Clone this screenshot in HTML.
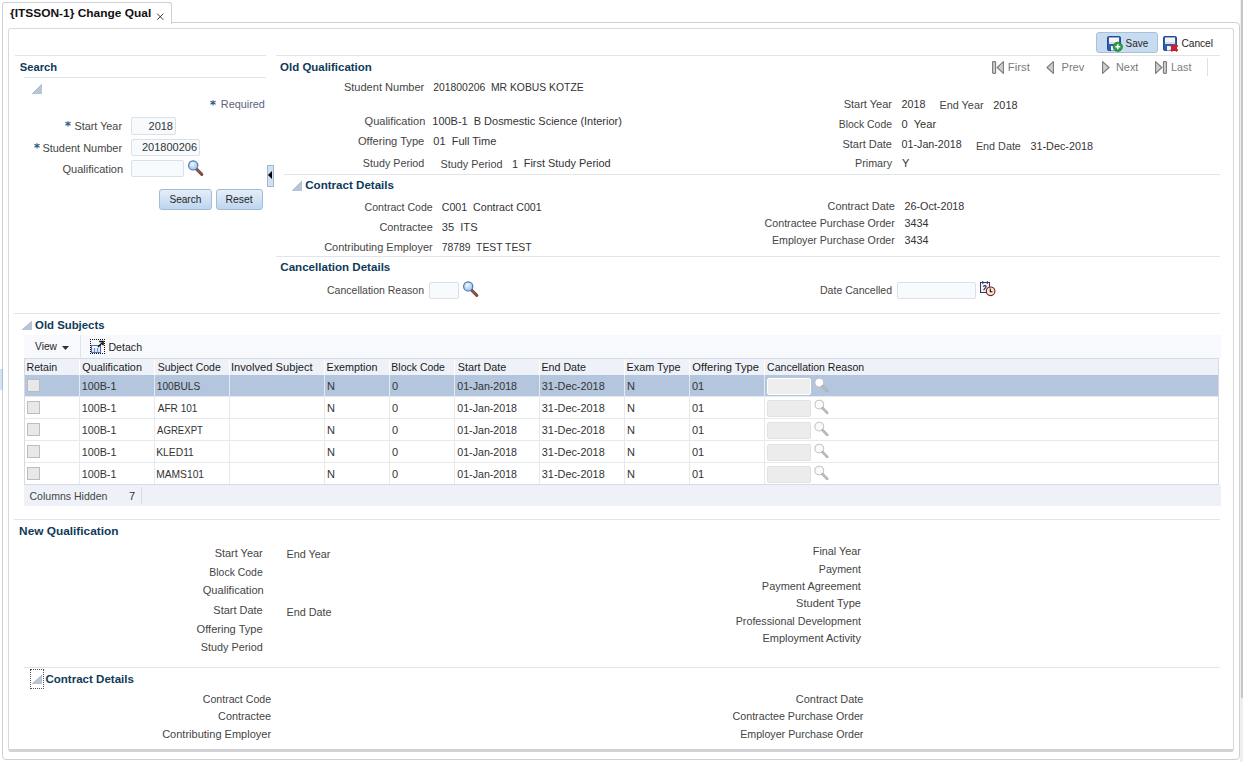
<!DOCTYPE html><html><head><meta charset="utf-8"><style>
html,body{margin:0;padding:0;background:#fff;width:1243px;height:762px;overflow:hidden;position:relative}
div{box-sizing:content-box}
.l,.v,.h,.b,.n,.th,.td{position:absolute;white-space:pre;font-family:"Liberation Sans",sans-serif;font-size:11px;line-height:13px}
.l{color:#454545}
.v{color:#333333}
.th{color:#1a1a1a}
.td{color:#333}
.n{color:#7b7b7b}
.h{color:#0f3a5a;font-weight:bold;font-size:11.5px}
.b{color:#262626}
.r{width:400px;text-align:right}
</style></head><body>

<div style="position:absolute;left:1240px;top:0px;width:3px;height:762px;background:#efefef"></div>
<div style="position:absolute;left:1241px;top:0px;width:2px;height:698px;background:#c6c6c6"></div>
<div style="position:absolute;left:2px;top:22px;width:1236px;height:736px;border:1px solid #cdd0d4;border-radius:0 4px 4px 4px;background:#fff"></div>
<div style="position:absolute;left:0px;top:369px;width:2px;height:21px;background:#d3e2f4;border-right:1px solid #a9bdd6"></div>
<div style="position:absolute;left:2px;top:2px;width:168px;height:21px;border:1px solid #cdd0d4;border-bottom:none;border-radius:3px 3px 0 0;background:#fff"></div>
<div id="t1" class="b" style="left:10px;top:7px;font-weight:bold;font-size:11.5px;color:#111;transform:translateX(0.00px) scaleX(1.0375);transform-origin:0 0;">{ITSSON-1} Change Qual</div>
<svg style="position:absolute;left:156px;top:12px" width="9" height="9" viewBox="0 0 9 9"><path d="M1.2 1.7L7.3 7.8M7.3 1.7L1.2 7.8" stroke="#3a3a3a" stroke-width="1"/></svg>
<div style="position:absolute;left:8px;top:28px;width:1224px;height:720px;border:1px solid #d7dadd;border-bottom:3px solid #d0d2d5;border-radius:3px;background:#fff"></div>
<div style="position:absolute;left:15px;top:55px;width:251px;height:1px;background:#e1e4e8"></div>
<div id="t2" class="h" style="left:20px;top:61px;;transform:translateX(-0.20px) scaleX(0.9711);transform-origin:0 0;">Search</div>
<div style="position:absolute;left:24px;top:77px;width:242px;height:1px;background:#e1e4e8"></div>
<svg style="position:absolute;left:32px;top:84px" width="10" height="10" viewBox="0 0 10 10"><path d="M10 0 L10 10 L0 10 Z" fill="#b7c5d6"/><path d="M10 0 L0 10" stroke="#9fb0c4" stroke-width="0.8"/></svg>
<svg style="position:absolute;left:210px;top:100px" width="6" height="6" viewBox="0 0 6 6"><path d="M3 0.2v5.2M0.4 1.3L5.6 4.3M0.4 4.3L5.6 1.3" stroke="#2a5b86" stroke-width="1.1"/></svg>
<div id="t3" class="l" style="left:222px;top:98px;color:#5a6380;transform:translateX(-1.19px) scaleX(0.9860);transform-origin:0 0;">Required</div>
<svg style="position:absolute;left:65px;top:121px" width="6" height="6" viewBox="0 0 6 6"><path d="M3 0.2v5.2M0.4 1.3L5.6 4.3M0.4 4.3L5.6 1.3" stroke="#2a5b86" stroke-width="1.1"/></svg>
<div id="t4" class="l r" style="left:-277px;top:120px;;transform:translateX(-1.00px) scaleX(0.9833);transform-origin:400px 0;">Start Year</div>
<div style="position:absolute;left:131px;top:117px;width:43px;height:16px;border:1px solid #d9e0e8;background:#f8fbfe;border-radius:2px"></div>
<div id="t5" class="v r" style="left:-227px;top:120px;;">2018</div>
<svg style="position:absolute;left:34px;top:143px" width="6" height="6" viewBox="0 0 6 6"><path d="M3 0.2v5.2M0.4 1.3L5.6 4.3M0.4 4.3L5.6 1.3" stroke="#2a5b86" stroke-width="1.1"/></svg>
<div id="t6" class="l r" style="left:-277px;top:142px;;transform:translateX(-0.90px) scaleX(0.9949);transform-origin:400px 0;">Student Number</div>
<div style="position:absolute;left:131px;top:139px;width:67px;height:15px;border:1px solid #d9e0e8;background:#f8fbfe;border-radius:2px"></div>
<div id="t7" class="v r" style="left:-203px;top:141px;;">201800206</div>
<div id="t8" class="l r" style="left:-277px;top:163px;;transform:translateX(0.10px) scaleX(1.0017);transform-origin:400px 0;">Qualification</div>
<div style="position:absolute;left:131px;top:160px;width:51px;height:15px;border:1px solid #d9e0e8;background:#f8fbfe;border-radius:2px"></div>
<svg style="position:absolute;left:187px;top:160px" width="17" height="17" viewBox="0 0 17 17"><defs><radialGradient id="mg" cx="0.4" cy="0.35" r="0.75"><stop offset="0" stop-color="#eef7ff"/><stop offset="1" stop-color="#8fb9ea"/></radialGradient></defs><path d="M9.8 9.4 L14.8 14.4" stroke="#7a4a3a" stroke-width="3" stroke-linecap="round"/><path d="M10.3 9.9 L14.3 13.9" stroke="#b08070" stroke-width="1" stroke-dasharray="1,1"/><circle cx="6.2" cy="5.4" r="4.6" fill="url(#mg)" stroke="#5078b0" stroke-width="1.2"/></svg>
<div style="position:absolute;left:267px;top:165px;width:5px;height:20px;border:1px solid #a6b7ca;background:#cfe1f5"></div>
<svg style="position:absolute;left:268px;top:171px" width="5" height="8"><path d="M4 0 L0 4 L4 8 Z" fill="#000"/></svg>
<div style="position:absolute;left:159px;top:189px;width:51px;height:19px;border:1px solid #a3bbd4;border-radius:3px;background:linear-gradient(#e4eefa,#bed5ee)"></div>
<div id="t9" class="b" style="left:169px;top:193px;;transform:translateX(0.40px) scaleX(0.9171);transform-origin:0 0;">Search</div>
<div style="position:absolute;left:216px;top:189px;width:45px;height:19px;border:1px solid #a3bbd4;border-radius:3px;background:linear-gradient(#e4eefa,#bed5ee)"></div>
<div id="t10" class="b" style="left:226px;top:193px;;transform:translateX(-0.55px) scaleX(0.9500);transform-origin:0 0;">Reset</div>
<div style="position:absolute;left:276px;top:55px;width:944px;height:1px;background:#e1e4e8"></div>
<div id="t11" class="h" style="left:280px;top:61px;;transform:translateX(0.10px) scaleX(0.9967);transform-origin:0 0;">Old Qualification</div>
<div style="position:absolute;left:1096px;top:32px;width:60px;height:19px;border:1px solid #a9c0d9;border-radius:3px;background:#c8dcf1"></div>
<svg style="position:absolute;left:1107px;top:36px" width="16" height="16" viewBox="0 0 16 16">
<rect x="0.5" y="0.5" width="13" height="14" rx="1.2" fill="#2f5fb3" stroke="#234a90" stroke-width="1"/>
<rect x="2" y="1.5" width="10" height="6.5" fill="#f4f4f4"/><rect x="2" y="6" width="10" height="2" fill="#dcdcdc"/>
<rect x="4" y="10" width="4" height="4.5" fill="#eef2f8"/>
<circle cx="10.8" cy="10.8" r="4.6" fill="#2f9e45" stroke="#1d7a30" stroke-width="0.8"/>
<path d="M10.8 8.3v5M8.3 10.8h5" stroke="#fff" stroke-width="1.5"/></svg>
<div id="t12" class="b" style="left:1126px;top:37px;;transform:translateX(-0.40px) scaleX(0.9040);transform-origin:0 0;">Save</div>
<svg style="position:absolute;left:1163px;top:36px" width="16" height="16" viewBox="0 0 16 16">
<rect x="0.5" y="0.5" width="13" height="14" rx="1.2" fill="#2f5fb3" stroke="#234a90" stroke-width="1"/>
<rect x="2" y="1.5" width="10" height="6.5" fill="#f4f4f4"/><rect x="2" y="6" width="10" height="2" fill="#dcdcdc"/>
<rect x="4" y="10" width="4" height="4.5" fill="#eef2f8"/>
<path d="M8 9L14.5 15M14.5 9L8 15" stroke="#d42020" stroke-width="2.6"/></svg>
<div id="t13" class="b" style="left:1182px;top:37px;;transform:translateX(-0.60px) scaleX(0.9235);transform-origin:0 0;">Cancel</div>
<svg style="position:absolute;left:992px;top:61px" width="13" height="13" viewBox="0 0 13 13"><rect x="0.6" y="0.6" width="3" height="11.8" rx="0.8" fill="#cfcfcf" stroke="#7a7a7a" stroke-width="1.1"/><path d="M11.4 0.6 L5.2 6.5 L11.4 12.4 Z" fill="#cfcfcf" stroke="#7a7a7a" stroke-width="1.1" stroke-linejoin="round"/></svg>
<div id="t14" class="n" style="left:1009px;top:61px;;transform:translateX(-1.24px) scaleX(1.0350);transform-origin:0 0;">First</div>
<svg style="position:absolute;left:1046px;top:61px" width="13" height="13" viewBox="0 0 13 13"><path d="M7.4 0.6 L1.0 6.5 L7.4 12.4 Z" fill="#cfcfcf" stroke="#7a7a7a" stroke-width="1.1" stroke-linejoin="round"/></svg>
<div id="t15" class="n" style="left:1063px;top:61px;;transform:translateX(-1.51px) scaleX(1.0095);transform-origin:0 0;">Prev</div>
<svg style="position:absolute;left:1102px;top:61px" width="13" height="13" viewBox="0 0 13 13"><path d="M0.6 0.6 L7.0 6.5 L0.6 12.4 Z" fill="#cfcfcf" stroke="#7a7a7a" stroke-width="1.1" stroke-linejoin="round"/></svg>
<div id="t16" class="n" style="left:1117px;top:61px;;transform:translateX(-0.99px) scaleX(0.9864);transform-origin:0 0;">Next</div>
<svg style="position:absolute;left:1155px;top:61px" width="13" height="13" viewBox="0 0 13 13"><path d="M0.6 0.6 L6.8 6.5 L0.6 12.4 Z" fill="#cfcfcf" stroke="#7a7a7a" stroke-width="1.1" stroke-linejoin="round"/><rect x="8.4" y="0.6" width="3" height="11.8" rx="0.8" fill="#cfcfcf" stroke="#7a7a7a" stroke-width="1.1"/></svg>
<div id="t17" class="n" style="left:1172px;top:61px;;transform:translateX(-0.88px) scaleX(0.9750);transform-origin:0 0;">Last</div>
<div style="position:absolute;left:1207px;top:58px;width:1px;height:18px;background:#e0e0e0"></div>
<div id="t18" class="l r" style="left:25px;top:81px;;transform:translateX(-0.70px) scaleX(1.0038);transform-origin:400px 0;">Student Number</div>
<div id="t19" class="v" style="left:433px;top:81px;;transform:translateX(0.30px) scaleX(0.9421);transform-origin:0 0;">201800206  MR KOBUS KOTZE</div>
<div id="t20" class="l r" style="left:25px;top:115px;;transform:translateX(0.30px) scaleX(1.0034);transform-origin:400px 0;">Qualification</div>
<div id="t21" class="v" style="left:433px;top:115px;;transform:translateX(-0.70px) scaleX(0.9968);transform-origin:0 0;">100B-1  B Dosmestic Science (Interior)</div>
<div id="t22" class="l r" style="left:25px;top:135px;;transform:translateX(-0.70px) scaleX(1.0108);transform-origin:400px 0;">Offering Type</div>
<div id="t23" class="v" style="left:433px;top:135px;;transform:translateX(0.30px) scaleX(1.0016);transform-origin:0 0;">01  Full Time</div>
<div id="t24" class="l r" style="left:25px;top:157px;;transform:translateX(-0.70px) scaleX(0.9758);transform-origin:400px 0;">Study Period</div>
<div id="t25" class="l" style="left:441px;top:158px;;transform:translateX(-0.48px) scaleX(0.9836);transform-origin:0 0;">Study Period</div>
<div id="t26" class="v" style="left:512px;top:158px;;">1</div>
<div id="t27" class="v" style="left:525px;top:157px;;transform:translateX(-1.29px) scaleX(0.9942);transform-origin:0 0;">First Study Period</div>
<div id="t28" class="l r" style="left:493px;top:98px;;transform:translateX(-1.00px) scaleX(1.0000);transform-origin:400px 0;">Start Year</div>
<div id="t29" class="v" style="left:902px;top:98px;;transform:translateX(-0.40px) scaleX(0.9750);transform-origin:0 0;">2018</div>
<div id="t30" class="l" style="left:940px;top:99px;;transform:translateX(-0.59px) scaleX(0.9886);transform-origin:0 0;">End Year</div>
<div id="t31" class="v" style="left:993px;top:99px;;transform:translateX(0.30px) scaleX(0.9875);transform-origin:0 0;">2018</div>
<div id="t32" class="l r" style="left:493px;top:118px;;transform:translateX(-1.00px) scaleX(0.9464);transform-origin:400px 0;">Block Code</div>
<div id="t33" class="v" style="left:902px;top:118px;;transform:translateX(-0.40px) scaleX(1.0088);transform-origin:0 0;">0  Year</div>
<div id="t34" class="l r" style="left:493px;top:138px;;transform:translateX(-1.00px) scaleX(1.0000);transform-origin:400px 0;">Start Date</div>
<div id="t35" class="v" style="left:902px;top:138px;;transform:translateX(-0.40px) scaleX(0.9710);transform-origin:0 0;">01-Jan-2018</div>
<div id="t36" class="l" style="left:977px;top:140px;;transform:translateX(-1.08px) scaleX(0.9800);transform-origin:0 0;">End Date</div>
<div id="t37" class="v" style="left:1030px;top:140px;;transform:translateX(0.50px) scaleX(0.9825);transform-origin:0 0;">31-Dec-2018</div>
<div id="t38" class="l r" style="left:493px;top:157px;;transform:translateX(-1.00px) scaleX(0.9757);transform-origin:400px 0;">Primary</div>
<div id="t39" class="v" style="left:902px;top:157px;;">Y</div>
<div style="position:absolute;left:284px;top:174px;width:936px;height:1px;background:#e1e4e8"></div>
<svg style="position:absolute;left:292px;top:181px" width="10" height="10" viewBox="0 0 10 10"><path d="M10 0 L10 10 L0 10 Z" fill="#b7c5d6"/><path d="M10 0 L0 10" stroke="#9fb0c4" stroke-width="0.8"/></svg>
<div id="t40" class="h" style="left:305px;top:179px;;transform:translateX(0.20px) scaleX(1.0068);transform-origin:0 0;">Contract Details</div>
<div id="t41" class="l r" style="left:33px;top:201px;;transform:translateX(-0.30px) scaleX(0.9606);transform-origin:400px 0;">Contract Code</div>
<div id="t42" class="v" style="left:442px;top:201px;;transform:translateX(-0.30px) scaleX(0.9670);transform-origin:0 0;">C001  Contract C001</div>
<div id="t43" class="l r" style="left:33px;top:221px;;transform:translateX(-0.30px) scaleX(0.9906);transform-origin:400px 0;">Contractee</div>
<div id="t44" class="v" style="left:442px;top:221px;;transform:translateX(-0.30px) scaleX(1.0114);transform-origin:0 0;">35  ITS</div>
<div id="t45" class="l r" style="left:33px;top:241px;;transform:translateX(-0.30px) scaleX(0.9972);transform-origin:400px 0;">Contributing Employer</div>
<div id="t46" class="v" style="left:442px;top:241px;;transform:translateX(-0.30px) scaleX(0.9421);transform-origin:0 0;">78789  TEST TEST</div>
<div id="t47" class="l r" style="left:495px;top:200px;;transform:translateX(-0.20px) scaleX(0.9910);transform-origin:400px 0;">Contract Date</div>
<div id="t48" class="v" style="left:904px;top:200px;;transform:translateX(0.50px) scaleX(0.9787);transform-origin:0 0;">26-Oct-2018</div>
<div id="t49" class="l r" style="left:495px;top:217px;;transform:translateX(-0.20px) scaleX(0.9679);transform-origin:400px 0;">Contractee Purchase Order</div>
<div id="t50" class="v" style="left:904px;top:217px;;transform:translateX(0.50px) scaleX(0.9792);transform-origin:0 0;">3434</div>
<div id="t51" class="l r" style="left:495px;top:234px;;transform:translateX(-0.20px) scaleX(0.9661);transform-origin:400px 0;">Employer Purchase Order</div>
<div id="t52" class="v" style="left:904px;top:234px;;transform:translateX(0.50px) scaleX(0.9792);transform-origin:0 0;">3434</div>
<div style="position:absolute;left:276px;top:256px;width:944px;height:1px;background:#e1e4e8"></div>
<div id="t53" class="h" style="left:280px;top:261px;;transform:translateX(0.30px) scaleX(1.0064);transform-origin:0 0;">Cancellation Details</div>
<div id="t54" class="l r" style="left:24px;top:284px;;transform:translateX(0.00px) scaleX(0.9554);transform-origin:400px 0;">Cancellation Reason</div>
<div style="position:absolute;left:429px;top:282px;width:28px;height:15px;border:1px solid #d9e0e8;background:#f8fbfe;border-radius:2px"></div>
<svg style="position:absolute;left:462px;top:281px" width="17" height="17" viewBox="0 0 17 17"><defs><radialGradient id="mg" cx="0.4" cy="0.35" r="0.75"><stop offset="0" stop-color="#eef7ff"/><stop offset="1" stop-color="#8fb9ea"/></radialGradient></defs><path d="M9.8 9.4 L14.8 14.4" stroke="#7a4a3a" stroke-width="3" stroke-linecap="round"/><path d="M10.3 9.9 L14.3 13.9" stroke="#b08070" stroke-width="1" stroke-dasharray="1,1"/><circle cx="6.2" cy="5.4" r="4.6" fill="url(#mg)" stroke="#5078b0" stroke-width="1.2"/></svg>
<div id="t55" class="l r" style="left:492px;top:284px;;transform:translateX(0.10px) scaleX(0.9587);transform-origin:400px 0;">Date Cancelled</div>
<div style="position:absolute;left:897px;top:282px;width:77px;height:15px;border:1px solid #d9e0e8;background:#f8fbfe;border-radius:2px"></div>
<svg style="position:absolute;left:979px;top:279px" width="18" height="18" viewBox="0 0 18 18">
<rect x="1.5" y="3.5" width="9" height="10" fill="#eef0fb" stroke="#3c3c68" stroke-width="1"/>
<path d="M3.8 2v3M8.3 2v3" stroke="#3c3c68" stroke-width="1"/>
<path d="M4.3 7.6 Q5.8 5.8 7.2 7.2 Q7.2 8.4 4.6 11" fill="none" stroke="#333" stroke-width="1.1"/>
<circle cx="11.6" cy="12.3" r="4.3" fill="#fbe6d6" stroke="#7a1c16" stroke-width="1.1"/>
<path d="M11.3 9.6v3.1h2.2" fill="none" stroke="#111" stroke-width="1.1"/></svg>
<div style="position:absolute;left:14px;top:313px;width:1206px;height:1px;background:#e1e4e8"></div>
<svg style="position:absolute;left:22px;top:321px" width="10" height="9" viewBox="0 0 10 9"><path d="M10 0 L10 9 L0 9 Z" fill="#b7c5d6"/><path d="M10 0 L0 9" stroke="#9fb0c4" stroke-width="0.8"/></svg>
<div id="t56" class="h" style="left:35px;top:319px;;transform:translateX(0.10px) scaleX(0.9871);transform-origin:0 0;">Old Subjects</div>
<div style="position:absolute;left:24px;top:335px;width:1197px;height:23px;background:#f7f9fc"></div>
<div id="t57" class="b" style="left:35px;top:340px;;transform:translateX(0.10px) scaleX(0.9250);transform-origin:0 0;">View</div>
<svg style="position:absolute;left:62px;top:346px" width="8" height="5"><path d="M0 0 L7 0 L3.5 4 Z" fill="#333"/></svg>
<div style="position:absolute;left:80px;top:335px;width:1px;height:23px;background:#dfe4ea"></div>
<div style="position:absolute;left:90px;top:339px;width:13px;height:13px;border:1px dotted #111"></div>
<svg style="position:absolute;left:90px;top:339px" width="15" height="15" viewBox="0 0 15 15">
<rect x="1.5" y="6.5" width="9" height="7" fill="#dbe9fb" stroke="#4b6fb5" stroke-width="1"/>
<rect x="2" y="7" width="8" height="1.6" fill="#ffffff"/>
<path d="M4.5 9v4.5M7.5 9v4.5" stroke="#6f8fcf" stroke-width="1"/>
<path d="M8 8 L12.3 3.7" stroke="#111" stroke-width="1.4"/><path d="M9.2 2.5h3.8v3.8" fill="none" stroke="#111" stroke-width="1.6"/></svg>
<div id="t58" class="b" style="left:109px;top:341px;;transform:translateX(-0.56px) scaleX(0.9647);transform-origin:0 0;">Detach</div>
<div style="position:absolute;left:24px;top:358px;width:1193px;height:126px;border:1px solid #d5dbe3;border-bottom:none;background:#fff"></div>
<div style="position:absolute;left:25px;top:359px;width:1193px;height:16px;background:#eef2f8"></div>
<div id="t59" class="th" style="left:27px;top:361px;;transform:translateX(-0.46px) scaleX(0.9645);transform-origin:0 0;">Retain</div>
<div id="t60" class="th" style="left:82px;top:361px;;transform:translateX(0.30px) scaleX(0.9850);transform-origin:0 0;">Qualification</div>
<div id="t61" class="th" style="left:157px;top:361px;;transform:translateX(0.70px) scaleX(0.9545);transform-origin:0 0;">Subject Code</div>
<div id="t62" class="th" style="left:232px;top:361px;;transform:translateX(-1.01px) scaleX(1.0125);transform-origin:0 0;">Involved Subject</div>
<div id="t63" class="th" style="left:327px;top:361px;;transform:translateX(-0.48px) scaleX(0.9784);transform-origin:0 0;">Exemption</div>
<div id="t64" class="th" style="left:392px;top:361px;;transform:translateX(-0.65px) scaleX(0.9527);transform-origin:0 0;">Block Code</div>
<div id="t65" class="th" style="left:457px;top:361px;;transform:translateX(0.70px) scaleX(0.9816);transform-origin:0 0;">Start Date</div>
<div id="t66" class="th" style="left:542px;top:361px;;transform:translateX(-0.57px) scaleX(0.9711);transform-origin:0 0;">End Date</div>
<div id="t67" class="th" style="left:627px;top:361px;;transform:translateX(-0.48px) scaleX(0.9833);transform-origin:0 0;">Exam Type</div>
<div id="t68" class="th" style="left:692px;top:361px;;transform:translateX(0.30px) scaleX(1.0169);transform-origin:0 0;">Offering Type</div>
<div id="t69" class="th" style="left:767px;top:361px;;transform:translateX(0.10px) scaleX(0.9554);transform-origin:0 0;">Cancellation Reason</div>
<div style="position:absolute;left:79px;top:359px;width:1px;height:16px;background:#ffffff"></div>
<div style="position:absolute;left:154px;top:359px;width:1px;height:16px;background:#ffffff"></div>
<div style="position:absolute;left:229px;top:359px;width:1px;height:16px;background:#ffffff"></div>
<div style="position:absolute;left:324px;top:359px;width:1px;height:16px;background:#ffffff"></div>
<div style="position:absolute;left:389px;top:359px;width:1px;height:16px;background:#ffffff"></div>
<div style="position:absolute;left:454px;top:359px;width:1px;height:16px;background:#ffffff"></div>
<div style="position:absolute;left:539px;top:359px;width:1px;height:16px;background:#ffffff"></div>
<div style="position:absolute;left:624px;top:359px;width:1px;height:16px;background:#ffffff"></div>
<div style="position:absolute;left:689px;top:359px;width:1px;height:16px;background:#ffffff"></div>
<div style="position:absolute;left:764px;top:359px;width:1px;height:16px;background:#ffffff"></div>
<div style="position:absolute;left:25px;top:375px;width:1193px;height:21px;background:#b3c6dd"></div>
<div style="position:absolute;left:25px;top:396px;width:1193px;height:1px;background:#e6e9ed"></div>
<div style="position:absolute;left:27px;top:379px;width:11px;height:11px;border:1px solid #bdbdbd;background:#e8e8e8"></div>
<div id="t70" class="td" style="left:82px;top:380px;;transform:translateX(-0.28px) scaleX(0.9765);transform-origin:0 0;">100B-1</div>
<div id="t71" class="td" style="left:157px;top:380px;;transform:translateX(-0.22px) scaleX(0.9239);transform-origin:0 0;">100BULS</div>
<div id="t72" class="td" style="left:327px;top:380px;;">N</div>
<div id="t73" class="td" style="left:392px;top:380px;;">0</div>
<div id="t74" class="td" style="left:457px;top:380px;;transform:translateX(0.30px) scaleX(0.9661);transform-origin:0 0;">01-Jan-2018</div>
<div id="t75" class="td" style="left:542px;top:380px;;transform:translateX(-0.20px) scaleX(0.9889);transform-origin:0 0;">31-Dec-2018</div>
<div id="t76" class="td" style="left:627px;top:380px;;">N</div>
<div id="t77" class="td" style="left:692px;top:380px;;">01</div>
<div style="position:absolute;left:767px;top:378px;width:42px;height:15px;border:1px solid #ffffff;background:#eeeeee;border-radius:2px"></div>
<svg style="position:absolute;left:813px;top:377px" width="17" height="17" viewBox="0 0 17 17"><circle cx="6.3" cy="5.6" r="4.4" fill="#ffffff" stroke="#c4c4c4" stroke-width="1.1"/><path d="M9.6 9.2 L14.2 13.8" stroke="#a6a6a6" stroke-width="2.6" stroke-linecap="round"/><path d="M9.6 9.2 L14.2 13.8" stroke="#d8d8d8" stroke-width="1" stroke-linecap="round"/></svg>
<div style="position:absolute;left:25px;top:418px;width:1193px;height:1px;background:#e6e9ed"></div>
<div style="position:absolute;left:27px;top:401px;width:11px;height:11px;border:1px solid #bdbdbd;background:#e8e8e8"></div>
<div id="t78" class="td" style="left:82px;top:402px;;transform:translateX(-0.28px) scaleX(0.9765);transform-origin:0 0;">100B-1</div>
<div id="t79" class="td" style="left:157px;top:402px;;transform:translateX(0.70px) scaleX(0.9163);transform-origin:0 0;">AFR 101</div>
<div id="t80" class="td" style="left:327px;top:402px;;">N</div>
<div id="t81" class="td" style="left:392px;top:402px;;">0</div>
<div id="t82" class="td" style="left:457px;top:402px;;transform:translateX(0.30px) scaleX(0.9661);transform-origin:0 0;">01-Jan-2018</div>
<div id="t83" class="td" style="left:542px;top:402px;;transform:translateX(-0.20px) scaleX(0.9889);transform-origin:0 0;">31-Dec-2018</div>
<div id="t84" class="td" style="left:627px;top:402px;;">N</div>
<div id="t85" class="td" style="left:692px;top:402px;;">01</div>
<div style="position:absolute;left:767px;top:400px;width:42px;height:15px;border:1px solid #e2e2e2;background:#ececec;border-radius:2px"></div>
<svg style="position:absolute;left:813px;top:399px" width="17" height="17" viewBox="0 0 17 17"><circle cx="6.3" cy="5.6" r="4.4" fill="#fafafa" stroke="#c4c4c4" stroke-width="1.1"/><path d="M9.6 9.2 L14.2 13.8" stroke="#a6a6a6" stroke-width="2.6" stroke-linecap="round"/><path d="M9.6 9.2 L14.2 13.8" stroke="#d8d8d8" stroke-width="1" stroke-linecap="round"/></svg>
<div style="position:absolute;left:25px;top:440px;width:1193px;height:1px;background:#e6e9ed"></div>
<div style="position:absolute;left:27px;top:423px;width:11px;height:11px;border:1px solid #bdbdbd;background:#e8e8e8"></div>
<div id="t86" class="td" style="left:82px;top:424px;;transform:translateX(-0.28px) scaleX(0.9765);transform-origin:0 0;">100B-1</div>
<div id="t87" class="td" style="left:157px;top:424px;;transform:translateX(0.10px) scaleX(0.8712);transform-origin:0 0;">AGREXPT</div>
<div id="t88" class="td" style="left:327px;top:424px;;">N</div>
<div id="t89" class="td" style="left:392px;top:424px;;">0</div>
<div id="t90" class="td" style="left:457px;top:424px;;transform:translateX(0.30px) scaleX(0.9661);transform-origin:0 0;">01-Jan-2018</div>
<div id="t91" class="td" style="left:542px;top:424px;;transform:translateX(-0.20px) scaleX(0.9889);transform-origin:0 0;">31-Dec-2018</div>
<div id="t92" class="td" style="left:627px;top:424px;;">N</div>
<div id="t93" class="td" style="left:692px;top:424px;;">01</div>
<div style="position:absolute;left:767px;top:422px;width:42px;height:15px;border:1px solid #e2e2e2;background:#ececec;border-radius:2px"></div>
<svg style="position:absolute;left:813px;top:421px" width="17" height="17" viewBox="0 0 17 17"><circle cx="6.3" cy="5.6" r="4.4" fill="#fafafa" stroke="#c4c4c4" stroke-width="1.1"/><path d="M9.6 9.2 L14.2 13.8" stroke="#a6a6a6" stroke-width="2.6" stroke-linecap="round"/><path d="M9.6 9.2 L14.2 13.8" stroke="#d8d8d8" stroke-width="1" stroke-linecap="round"/></svg>
<div style="position:absolute;left:25px;top:462px;width:1193px;height:1px;background:#e6e9ed"></div>
<div style="position:absolute;left:27px;top:445px;width:11px;height:11px;border:1px solid #bdbdbd;background:#e8e8e8"></div>
<div id="t94" class="td" style="left:82px;top:446px;;transform:translateX(-0.28px) scaleX(0.9765);transform-origin:0 0;">100B-1</div>
<div id="t95" class="td" style="left:157px;top:446px;;transform:translateX(-0.84px) scaleX(0.9385);transform-origin:0 0;">KLED11</div>
<div id="t96" class="td" style="left:327px;top:446px;;">N</div>
<div id="t97" class="td" style="left:392px;top:446px;;">0</div>
<div id="t98" class="td" style="left:457px;top:446px;;transform:translateX(0.30px) scaleX(0.9661);transform-origin:0 0;">01-Jan-2018</div>
<div id="t99" class="td" style="left:542px;top:446px;;transform:translateX(-0.20px) scaleX(0.9889);transform-origin:0 0;">31-Dec-2018</div>
<div id="t100" class="td" style="left:627px;top:446px;;">N</div>
<div id="t101" class="td" style="left:692px;top:446px;;">01</div>
<div style="position:absolute;left:767px;top:444px;width:42px;height:15px;border:1px solid #e2e2e2;background:#ececec;border-radius:2px"></div>
<svg style="position:absolute;left:813px;top:443px" width="17" height="17" viewBox="0 0 17 17"><circle cx="6.3" cy="5.6" r="4.4" fill="#fafafa" stroke="#c4c4c4" stroke-width="1.1"/><path d="M9.6 9.2 L14.2 13.8" stroke="#a6a6a6" stroke-width="2.6" stroke-linecap="round"/><path d="M9.6 9.2 L14.2 13.8" stroke="#d8d8d8" stroke-width="1" stroke-linecap="round"/></svg>
<div style="position:absolute;left:25px;top:484px;width:1193px;height:1px;background:#e6e9ed"></div>
<div style="position:absolute;left:27px;top:467px;width:11px;height:11px;border:1px solid #bdbdbd;background:#e8e8e8"></div>
<div id="t102" class="td" style="left:82px;top:468px;;transform:translateX(-0.28px) scaleX(0.9765);transform-origin:0 0;">100B-1</div>
<div id="t103" class="td" style="left:157px;top:468px;;transform:translateX(-0.83px) scaleX(0.9320);transform-origin:0 0;">MAMS101</div>
<div id="t104" class="td" style="left:327px;top:468px;;">N</div>
<div id="t105" class="td" style="left:392px;top:468px;;">0</div>
<div id="t106" class="td" style="left:457px;top:468px;;transform:translateX(0.30px) scaleX(0.9661);transform-origin:0 0;">01-Jan-2018</div>
<div id="t107" class="td" style="left:542px;top:468px;;transform:translateX(-0.20px) scaleX(0.9889);transform-origin:0 0;">31-Dec-2018</div>
<div id="t108" class="td" style="left:627px;top:468px;;">N</div>
<div id="t109" class="td" style="left:692px;top:468px;;">01</div>
<div style="position:absolute;left:767px;top:466px;width:42px;height:15px;border:1px solid #e2e2e2;background:#ececec;border-radius:2px"></div>
<svg style="position:absolute;left:813px;top:465px" width="17" height="17" viewBox="0 0 17 17"><circle cx="6.3" cy="5.6" r="4.4" fill="#fafafa" stroke="#c4c4c4" stroke-width="1.1"/><path d="M9.6 9.2 L14.2 13.8" stroke="#a6a6a6" stroke-width="2.6" stroke-linecap="round"/><path d="M9.6 9.2 L14.2 13.8" stroke="#d8d8d8" stroke-width="1" stroke-linecap="round"/></svg>
<div style="position:absolute;left:79px;top:375px;width:1px;height:21px;background:#e4eaf2"></div>
<div style="position:absolute;left:79px;top:396px;width:1px;height:88px;background:#e6e9ed"></div>
<div style="position:absolute;left:154px;top:375px;width:1px;height:21px;background:#e4eaf2"></div>
<div style="position:absolute;left:154px;top:396px;width:1px;height:88px;background:#e6e9ed"></div>
<div style="position:absolute;left:229px;top:375px;width:1px;height:21px;background:#e4eaf2"></div>
<div style="position:absolute;left:229px;top:396px;width:1px;height:88px;background:#e6e9ed"></div>
<div style="position:absolute;left:324px;top:375px;width:1px;height:21px;background:#e4eaf2"></div>
<div style="position:absolute;left:324px;top:396px;width:1px;height:88px;background:#e6e9ed"></div>
<div style="position:absolute;left:389px;top:375px;width:1px;height:21px;background:#e4eaf2"></div>
<div style="position:absolute;left:389px;top:396px;width:1px;height:88px;background:#e6e9ed"></div>
<div style="position:absolute;left:454px;top:375px;width:1px;height:21px;background:#e4eaf2"></div>
<div style="position:absolute;left:454px;top:396px;width:1px;height:88px;background:#e6e9ed"></div>
<div style="position:absolute;left:539px;top:375px;width:1px;height:21px;background:#e4eaf2"></div>
<div style="position:absolute;left:539px;top:396px;width:1px;height:88px;background:#e6e9ed"></div>
<div style="position:absolute;left:624px;top:375px;width:1px;height:21px;background:#e4eaf2"></div>
<div style="position:absolute;left:624px;top:396px;width:1px;height:88px;background:#e6e9ed"></div>
<div style="position:absolute;left:689px;top:375px;width:1px;height:21px;background:#e4eaf2"></div>
<div style="position:absolute;left:689px;top:396px;width:1px;height:88px;background:#e6e9ed"></div>
<div style="position:absolute;left:764px;top:375px;width:1px;height:21px;background:#e4eaf2"></div>
<div style="position:absolute;left:764px;top:396px;width:1px;height:88px;background:#e6e9ed"></div>
<div style="position:absolute;left:24px;top:484px;width:1195px;height:1px;background:#d5dbe3"></div>
<div style="position:absolute;left:24px;top:485px;width:1197px;height:21px;background:#eef2f8"></div>
<div id="t110" class="l" style="left:29px;top:490px;;transform:translateX(0.50px) scaleX(0.9580);transform-origin:0 0;">Columns Hidden</div>
<div id="t111" class="v" style="left:129px;top:490px;;">7</div>
<div style="position:absolute;left:141px;top:487px;width:1px;height:17px;background:#d8dde4"></div>
<div style="position:absolute;left:14px;top:519px;width:1206px;height:1px;background:#e1e4e8"></div>
<div id="t112" class="h" style="left:20px;top:525px;;transform:translateX(-0.93px) scaleX(1.0305);transform-origin:0 0;">New Qualification</div>
<div id="t113" class="l r" style="left:-137px;top:547px;;transform:translateX(-0.30px) scaleX(0.9937);transform-origin:400px 0;">Start Year</div>
<div id="t114" class="l r" style="left:-137px;top:566px;;transform:translateX(-0.30px) scaleX(0.9482);transform-origin:400px 0;">Block Code</div>
<div id="t115" class="l r" style="left:-137px;top:584px;;transform:translateX(0.71px) scaleX(1.0068);transform-origin:400px 0;">Qualification</div>
<div id="t116" class="l r" style="left:-137px;top:604px;;transform:translateX(-0.30px) scaleX(0.9959);transform-origin:400px 0;">Start Date</div>
<div id="t117" class="l r" style="left:-137px;top:623px;;transform:translateX(-0.30px) scaleX(1.0077);transform-origin:400px 0;">Offering Type</div>
<div id="t118" class="l r" style="left:-137px;top:641px;;transform:translateX(-0.30px) scaleX(0.9839);transform-origin:400px 0;">Study Period</div>
<div id="t119" class="l" style="left:287px;top:548px;;transform:translateX(-0.58px) scaleX(0.9841);transform-origin:0 0;">End Year</div>
<div id="t120" class="l" style="left:287px;top:606px;;transform:translateX(-0.58px) scaleX(0.9844);transform-origin:0 0;">End Date</div>
<div id="t121" class="l r" style="left:461px;top:545px;;transform:translateX(-0.10px) scaleX(0.9833);transform-origin:400px 0;">Final Year</div>
<div id="t122" class="l r" style="left:461px;top:563px;;transform:translateX(-0.10px) scaleX(0.9698);transform-origin:400px 0;">Payment</div>
<div id="t123" class="l r" style="left:461px;top:580px;;transform:translateX(-0.10px) scaleX(0.9939);transform-origin:400px 0;">Payment Agreement</div>
<div id="t124" class="l r" style="left:461px;top:597px;;transform:translateX(-0.10px) scaleX(1.0031);transform-origin:400px 0;">Student Type</div>
<div id="t125" class="l r" style="left:461px;top:615px;;transform:translateX(-0.10px) scaleX(0.9750);transform-origin:400px 0;">Professional Development</div>
<div id="t126" class="l r" style="left:461px;top:632px;;transform:translateX(-0.10px) scaleX(1.0010);transform-origin:400px 0;">Employment Activity</div>
<div style="position:absolute;left:24px;top:667px;width:1196px;height:1px;background:#e1e4e8"></div>
<div style="position:absolute;left:30px;top:669px;width:12px;height:18px;border:1px dotted #555"></div>
<svg style="position:absolute;left:32px;top:675px" width="10" height="9" viewBox="0 0 10 9"><path d="M10 0 L10 9 L0 9 Z" fill="#b7c5d6"/><path d="M10 0 L0 9" stroke="#9fb0c4" stroke-width="0.8"/></svg>
<div id="t127" class="h" style="left:45px;top:673px;;transform:translateX(0.40px) scaleX(1.0034);transform-origin:0 0;">Contract Details</div>
<div id="t128" class="l r" style="left:-129px;top:693px;;transform:translateX(0.10px) scaleX(0.9634);transform-origin:400px 0;">Contract Code</div>
<div id="t129" class="l r" style="left:-129px;top:710px;;transform:translateX(0.10px) scaleX(0.9849);transform-origin:400px 0;">Contractee</div>
<div id="t130" class="l r" style="left:-129px;top:728px;;transform:translateX(0.10px) scaleX(1.0009);transform-origin:400px 0;">Contributing Employer</div>
<div id="t131" class="l r" style="left:464px;top:693px;;transform:translateX(-0.60px) scaleX(0.9955);transform-origin:400px 0;">Contract Date</div>
<div id="t132" class="l r" style="left:464px;top:710px;;transform:translateX(-0.60px) scaleX(0.9731);transform-origin:400px 0;">Contractee Purchase Order</div>
<div id="t133" class="l r" style="left:464px;top:728px;;transform:translateX(-0.60px) scaleX(0.9693);transform-origin:400px 0;">Employer Purchase Order</div>
</body></html>
